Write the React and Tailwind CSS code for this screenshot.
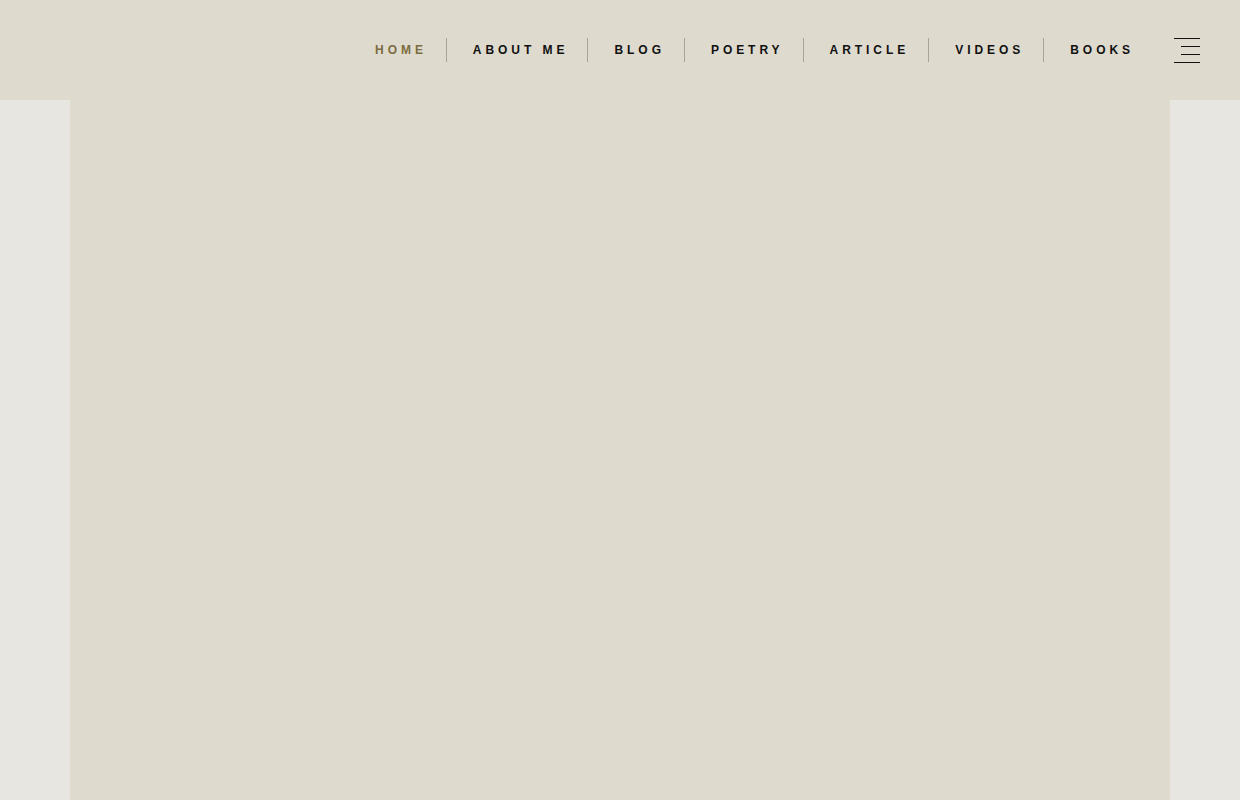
const links = ["HOME", "ABOUT ME", "BLOG", "POETRY", "ARTICLE", "VIDEOS", "BOOKS"];

function MenuIcon() {
  return (
    <svg width="26" height="26" viewBox="0 0 26 26" className="block">
      <line x1="0" y1="0.5" x2="26" y2="0.5" stroke="#111" strokeWidth="1" />
      <line x1="7" y1="8.5" x2="26" y2="8.5" stroke="#111" strokeWidth="1" />
      <line x1="7" y1="16.5" x2="26" y2="16.5" stroke="#111" strokeWidth="1" />
      <line x1="0" y1="24.5" x2="26" y2="24.5" stroke="#111" strokeWidth="1" />
    </svg>
  );
}

export default function App() {
  return (
    <div
      className="min-h-[800px] bg-[#e8e6e1]"
      style={{ fontFamily: '"Liberation Sans", Arial, sans-serif' }}
    >
      {/* Header */}
      <header className="h-[100px] bg-[#dedace] flex items-center justify-end pr-[40px]">
        <nav className="flex items-center">
          {links.map((label, i) => (
            <div key={label} className="flex items-center">
              {i > 0 && <span className="w-px h-[24px] bg-[#a8a395]" />}
              <a
                href="#"
                className={
                  "text-[12px] font-bold tracking-[3.95px] leading-none " +
                  (i === 0 ? "text-[#7b6c3f] pr-[19px]" : "text-[#111] pl-[26px] pr-[19px]")
                }
              >
                {label}
              </a>
            </div>
          ))}
        </nav>
        <button className="ml-[21px] pt-px">
          <MenuIcon />
        </button>
      </header>

      {/* Body */}
      <div className="flex">
        <div className="w-[70px] shrink-0" />
        <main className="flex-1 h-[700px] bg-[#dedace]" />
        <div className="w-[70px] shrink-0" />
      </div>
    </div>
  );
}
